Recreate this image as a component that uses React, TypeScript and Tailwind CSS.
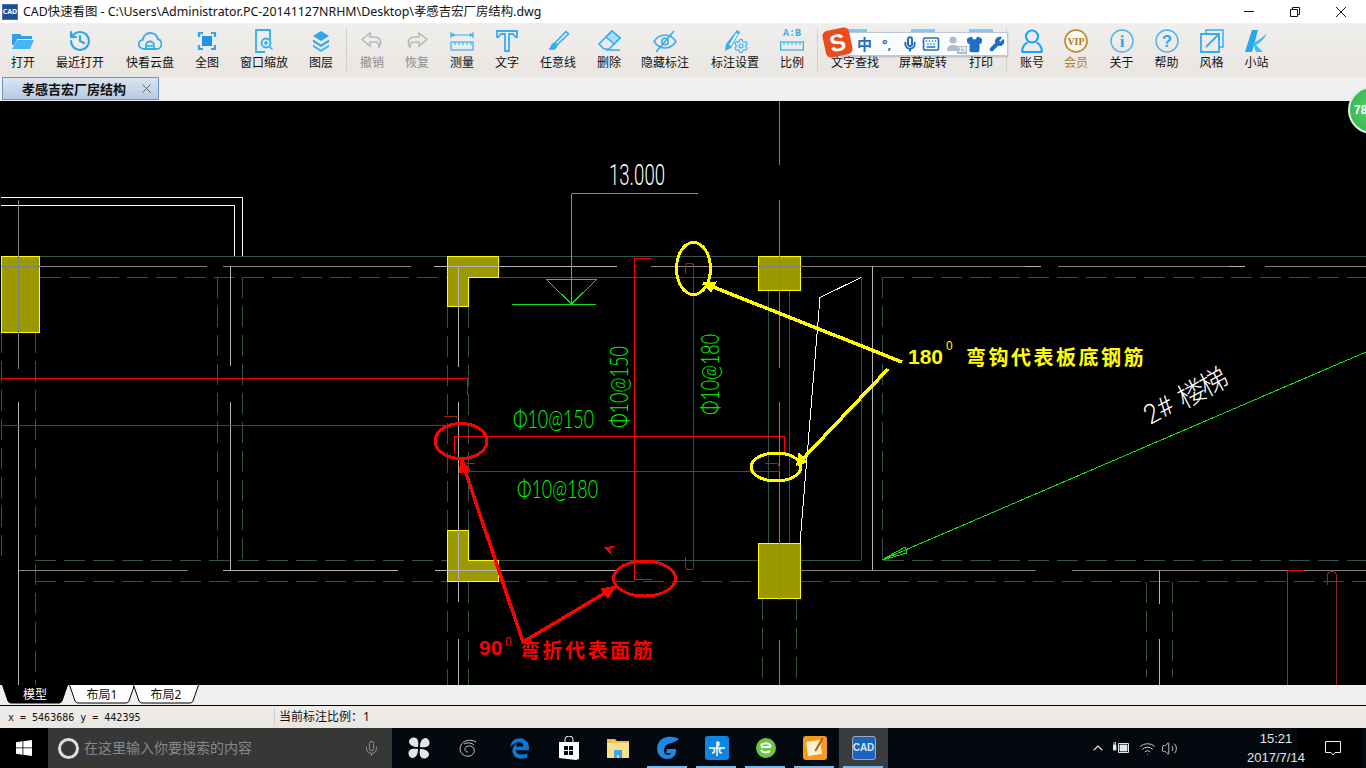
import React from 'react'
import { History, Settings, Mic, Wrench, Shirt, Keyboard, Wifi, Volume2, ChevronUp } from 'lucide-react'
import { FaEdgeLegacy } from 'react-icons/fa6'

const blue = '#35aef0'

function Box({ children }: { children: React.ReactNode }) {
    return (
        <svg width="24" height="24" viewBox="0 0 24 24" fill="none" stroke={blue} strokeWidth="1.6">
            {children}
        </svg>
    )
}

const icons: Record<string, React.ReactNode> = {
    open: (
        <Box>
            <path d="M1 5h8l2 2h10v3H6l-3 6H1z" fill="#2f9fe8" stroke="none" />
            <path d="M6 11h17l-4 9H1z" fill="#45b6f5" stroke="none" />
        </Box>
    ),
    recent: <History size={24} color="#2fa5ea" strokeWidth={2.2} />,
    cloud: (
        <Box>
            <path d="M6 20C2.500 20 0.800 17.500 0.800 15.200 0.800 12.800 2.500 11 4.800 10.800 5.400 6.800 8.500 4 12.300 4 16 4 19 6.500 19.800 10 22 10.500 23.400 12.800 23.400 15.200 23.400 17.800 21.500 20 18.500 20z" strokeWidth="1.8" />
            <path d="M8 20v-3.500a4 4 0 0 1 8 0V20" strokeWidth="1.8" />
            <path d="M8 17h8" />
        </Box>
    ),
    full: (
        <Box>
            <path d="M4 8V4h4M16 4h4v4M20 16v4h-4M8 20H4v-4" strokeWidth="2.2" stroke="#2fa5ea" />
            <rect x="7" y="7" width="10" height="10" fill="#1f93e6" stroke="none" />
        </Box>
    ),
    zoom: (
        <Box>
            <path d="M18 11V1H4v22h9" strokeWidth="1.8" />
            <circle cx="14" cy="14" r="4.500" strokeWidth="1.8" />
            <path d="M17.500 17.500l3 3M12 14h4M14 12v4" strokeWidth="1.600" />
        </Box>
    ),
    layers: (
        <Box>
            <path d="M12 2l8 5-8 5-8-5z" fill="#2fa5ea" stroke="none" />
            <path d="M4 10.500l8 5 8-5v2.500l-8 5-8-5z" fill="#2fa5ea" stroke="none" />
            <path d="M4 15.500l8 5 8-5V18l-8 5-8-5z" fill="#47b9f3" stroke="none" />
        </Box>
    ),
    undo: (
        <Box>
            <path d="M10 4L2 10.500 10 17v-4h5c2.500 0 4 1.500 4 5 3-4 2-10-5-10h-4z" stroke="#b8b8b8" />
        </Box>
    ),
    redo: (
        <Box>
            <path d="M14 4l8 6.500L14 17v-4H9c-2.500 0-4 1.500-4 5-3-4-2-10 5-10h4z" stroke="#b8b8b8" />
        </Box>
    ),
    measure: (
        <Box>
            <path d="M1 3v6M23 3v6M1 6h22" strokeWidth="1.200" />
            <path d="M1 6l3-1.500v3zM23 6l-3-1.500v3z" fill={blue} strokeWidth="0.600" />
            <rect x="1" y="13" width="22" height="8" strokeWidth="1.200" />
            <path d="M5 13v3M9 13v3M13 13v3M17 13v3M21 13v3" strokeWidth="1" />
        </Box>
    ),
    text: (
        <Box>
            <path d="M2 2h20v6h-1.500L18 5h-4v17h-4V5H6L3.500 8H2z" strokeWidth="1.800" />
        </Box>
    ),
    pen: (
        <Box>
            <path d="M9 14L20 2.500l2.500 2.500L11 16z" strokeWidth="1.600" />
            <path d="M9 14c-3 0-3.500 2-4 4l-2 2c3 1 8 1 8-4z" fill={blue} stroke={blue} strokeWidth="1" />
        </Box>
    ),
    eraser: (
        <Box>
            <path d="M15 2l8 7-11 11H7l-5-5z" strokeWidth="1.600" />
            <path d="M15 2l8 7-6 6-8-7z" fill="#a9dcf8" />
            <path d="M9 21h14" strokeWidth="1.600" />
        </Box>
    ),
    eye: (
        <Box>
            <path d="M1 12.500C4 8 8 6 12 6s8 2 11 6.500C20 17 16 19 12 19s-8-2-11-6.500z" strokeWidth="1.600" />
            <circle cx="12" cy="12.500" r="3.200" strokeWidth="1.600" />
            <path d="M21 2L3 23" strokeWidth="1.600" />
        </Box>
    ),
    mark: (
        <div className="relative h-6 w-6">
            <svg width="24" height="24" viewBox="0 0 24 24" fill="none">
                <path d="M14 1l3 2-9 16-6 3 1-7z" fill="#3aaeee" />
                <path d="M13 4l2 1-7 12-2-1z" fill="#eef6fb" />
            </svg>
            <Settings size={16} color={blue} strokeWidth={1.6} className="absolute top-[9px] left-[10px]" />
        </div>
    ),
    ratio: (
        <div className="flex h-6 w-6 flex-col items-center">
            <span className="h-[10px] font-['Liberation_Mono',monospace] text-[10px] leading-[10px] font-bold whitespace-nowrap text-[#35aef0]">A:B</span>
            <svg width="24" height="12" viewBox="0 0 24 12" fill="none" stroke={blue} strokeWidth="1.200" className="mt-[2px]">
                <rect x="0.600" y="1" width="22.800" height="8" />
                <path d="M4 1v3M8 1v3M12 1v3M16 1v3M20 1v3" strokeWidth="1" />
            </svg>
        </div>
    ),
    hidden: <div className="h-6 w-6 bg-[#7fcaf2]" />,
    user: (
        <svg width="24" height="24" viewBox="0 0 24 24" fill="none" stroke="#18a5f7" strokeWidth="2.200">
            <circle cx="12" cy="7.500" r="6" />
            <path d="M2 23c0-5 3-8.500 5.500-9.500M22 23c0-5-3-8.500-5.500-9.500M2 23h20" />
        </svg>
    ),
    vip: (
        <svg width="24" height="24" viewBox="0 0 24 24">
            <circle cx="12" cy="12" r="11" fill="#fdf8ee" stroke="#b8862c" strokeWidth="1.600" />
            <text x="12" y="15.500" textAnchor="middle" fontFamily="Liberation Serif, serif" fontWeight="700" fontSize="10" fill="#b07c1c">VIP</text>
        </svg>
    ),
    info: (
        <svg width="24" height="24" viewBox="0 0 24 24">
            <circle cx="12" cy="12" r="11" fill="none" stroke="#4db4ea" strokeWidth="1.400" />
            <text x="12" y="18" textAnchor="middle" fontFamily="Liberation Serif, serif" fontWeight="700" fontSize="17" fill="#36a7e6">i</text>
        </svg>
    ),
    help: (
        <svg width="24" height="24" viewBox="0 0 24 24">
            <circle cx="12" cy="12" r="11" fill="none" stroke="#4db4ea" strokeWidth="1.400" />
            <text x="12" y="18" textAnchor="middle" fontFamily="Liberation Sans, sans-serif" fontWeight="700" fontSize="17" fill="#36a7e6">?</text>
        </svg>
    ),
    style: (
        <Box>
            <path d="M6 5V1h17v17h-4" strokeWidth="1.500" />
            <path d="M1 5h18v18H1z" strokeWidth="1.800" />
            <path d="M6 18L19 5M12 5h7v7" strokeWidth="1.800" />
        </Box>
    ),
    site: (
        <svg width="24" height="24" viewBox="0 0 24 24">
            <path d="M7 1h6L7 23H0z" fill="#24a8ee" />
            <path d="M8 14C13 12 18 8 22 4 20 9 15 14 11 16l7 7h-7z" fill="#3fc0f5" />
        </svg>
    ),
}

type Tool = { label: string; width: string; icon: string; muted?: boolean; gold?: boolean }

const tools: (Tool | 'sep')[] = [
    { label: '打开', width: 'w-[46px]', icon: 'open' },
    { label: '最近打开', width: 'w-[68px]', icon: 'recent' },
    { label: '快看云盘', width: 'w-[72px]', icon: 'cloud' },
    { label: '全图', width: 'w-[42px]', icon: 'full' },
    { label: '窗口缩放', width: 'w-[72px]', icon: 'zoom' },
    { label: '图层', width: 'w-[42px]', icon: 'layers' },
    { label: '', width: 'w-[4px]', icon: '' },
    'sep',
    { label: '撤销', width: 'w-[50px]', icon: 'undo', muted: true },
    { label: '恢复', width: 'w-[40px]', icon: 'redo', muted: true },
    { label: '测量', width: 'w-[50px]', icon: 'measure' },
    { label: '文字', width: 'w-[40px]', icon: 'text' },
    { label: '任意线', width: 'w-[62px]', icon: 'pen' },
    { label: '删除', width: 'w-[40px]', icon: 'eraser' },
    { label: '隐藏标注', width: 'w-[72px]', icon: 'eye' },
    { label: '标注设置', width: 'w-[68px]', icon: 'mark' },
    { label: '比例', width: 'w-[46px]', icon: 'ratio' },
    { label: '', width: 'w-[2px]', icon: '' },
    'sep',
    { label: '文字查找', width: 'w-[74px]', icon: 'hidden' },
    { label: '屏幕旋转', width: 'w-[62px]', icon: 'hidden' },
    { label: '', width: 'w-[2px]', icon: '' },
    { label: '打印', width: 'w-[50px]', icon: 'hidden' },
    'sep',
    { label: '账号', width: 'w-[50px]', icon: 'user' },
    { label: '会员', width: 'w-[38px]', icon: 'vip', gold: true },
    { label: '关于', width: 'w-[53px]', icon: 'info' },
    { label: '帮助', width: 'w-[37px]', icon: 'help' },
    { label: '风格', width: 'w-[53px]', icon: 'style' },
    { label: '小站', width: 'w-[37px]', icon: 'site' },
]

function Toolbar() {
    return (
        <div className="relative flex h-[54px] items-start bg-linear-to-b from-[#f0efed] to-[#e9e5e1]">
            {tools.map((tool, i) =>
                tool === 'sep' ? (
                    <div key={i} className="mt-[5px] h-[44px] w-px shrink-0 bg-[#d2d0ce]" />
                ) : (
                    <div key={i} className={`${tool.width} flex shrink-0 flex-col items-center pt-[6px]`}>
                        {tool.icon && <div className="h-6 w-6">{icons[tool.icon]}</div>}
                        {tool.label && (
                            <span className={`mt-[2px] text-[12px] leading-[16px] whitespace-nowrap ${tool.muted ? 'text-[#8c8c8c]' : tool.gold ? 'text-[#b8801e]' : 'text-[#111]'}`}>
                                {tool.label}
                            </span>
                        )}
                    </div>
                ),
            )}
            <ImeBar />
        </div>
    )
}

// floating sogou input bar sitting on top of the toolbar
function ImeBar() {
    return (
        <div className="absolute top-[9px] left-[840px] flex h-[24px] w-[168px] items-center border border-[#b9c7d9] bg-[#fbfcfe] shadow-[0_1px_2px_rgba(90,110,140,0.4)]">
            <span className="ml-[16px] w-[16px] text-[15px] leading-[16px] font-bold text-[#1f6fc4]">中</span>
            <span className="ml-[9px] w-[14px] text-[13px] leading-[16px] font-bold text-[#1f6fc4]">°,</span>
            <Mic size={16} color="#1f6fc4" strokeWidth={3} className="ml-[6px]" />
            <Keyboard size={18} color="#1f6fc4" strokeWidth={2.2} className="ml-[4px]" />
            <div className="relative ml-[5px] h-[18px] w-[18px]">
                <svg width="18" height="18" viewBox="0 0 18 18" fill="#aebccb">
                    <circle cx="8" cy="5" r="3.500" />
                    <path d="M2 16c0-5 3-6 6-6s6 1 6 6z" />
                </svg>
                <span className="absolute right-[-4px] bottom-[-1px] bg-[#aebccb] px-px font-['Liberation_Sans',sans-serif] text-[7px] leading-[8px] font-bold text-white">15</span>
            </div>
            <Shirt size={17} color="#1f6fc4" fill="#1f6fc4" className="ml-[3px]" />
            <Wrench size={16} color="#1f6fc4" fill="#1f6fc4" className="ml-[6px]" />
            <div className="absolute top-[-4px] left-[-17px] flex h-[27px] w-[27px] rotate-[-12deg] items-center justify-center rounded-[5px] bg-[#ea4c1c] font-['Liberation_Sans',sans-serif] text-[24px] leading-none font-bold text-white">
                S
            </div>
        </div>
    )
}

const tealSolid = 'M40 256.500H1366M498 277.500H758M801 277.500H861M498 560.500H861M768.500 291V543M789.500 291V543M861.500 277V560'
const tealDash =
    'M40 277.500H447M883 277.500H1366M35 560.500H447M883 560.500H1366M35 581.500H447M498 581.500H758M801 581.500H1366M1.500 332V560M35.500 332V685M217.500 277V560M242.500 277V560M447.500 307V530M447.500 582V685M468.500 307V530M468.500 582V685M882.500 277V560M762.500 599V685M796.500 599V685M1146.500 582V677M1172.500 582V677'
const grayDark =
    'M1 266.500H207M223 266.500H411M651 266.500H1025M1058 266.500H1229M1265 266.500H1366M18.500 200V369M779.500 101V165M779.500 200V368M779.500 402V600M779.500 640V685M18 570.500H188M801 570.500H1036M1072 570.500H1366'
const grayLight =
    'M18.500 402V685M230.500 266V366M230.500 402V570M458.500 266V367M458.500 402V602M458.500 639V685M223 570.500H398M435 570.500H617M872.500 266V570M1159.500 570V604M1159.500 639V685M434 266.500H617M1025 266.500H1041M1229 266.500H1245'
const darkRed =
    'M1 425.500H450M444 416.500H456L458 419M463 471.500H779V466Q779 463.500 775 463.500H765M466 463.500H475M693.500 266V568Q693.500 570 689 570 685.500 570 685.500 566V557M693.500 266Q693.500 263 689 263 685.500 263 685.500 267V274M1336.500 576V685M1336.500 576Q1336.500 571.500 1332 571.500 1327.500 571.500 1327.500 576V585'

function Drawing() {
    return (
        <svg width="1366" height="584" viewBox="0 101 1366 584" fill="none" shapeRendering="crispEdges" className="block">
            <path d="M1 197.500H242.500V256M1 205.500H234.500V256" stroke="#fff" />
            <path d={tealSolid} stroke="#34504f" />
            <path d={tealDash} stroke="#34504f" strokeDasharray="21 8" />

            <g fill="#9c9800" stroke="#ffff00">
                <rect x="1.500" y="256.500" width="38" height="76" />
                <path d="M447.500 256.500H498.500V277.500H468.500V306.500H447.500Z" />
                <path d="M447.500 530.500H468.500V560.500H498.500V581.500H447.500Z" />
                <rect x="758.500" y="256.500" width="42" height="34" />
                <rect x="758.500" y="543.500" width="42" height="55" />
            </g>

            <path d={grayDark} stroke="#808080" />
            <path d={grayLight} stroke="#b4b4b4" />
            <path d="M861 277.500L820 297.500 800 543" stroke="#fff" />

            <path d={darkRed} stroke="#8e2c12" />
            <path
                d="M1 378.500H467V395M634.500 579.500V258.500H652M634.500 579.500H652M454.500 453V436.500H784.500V452M1287.500 685V570.500H1304"
                stroke="#ff0000"
            />

            <path d="M571.500 193.500H698M571.500 193.500V304M512 304.500H596M546 279H597L571.500 304Z" stroke="#16e016" />
            <path d="M882 560L1366 352M882 560L905 547 907 553Z" stroke="#16e016" />

            <text x="609" y="185" fill="#fff" fontFamily="Roboto, sans-serif" fontWeight="300" fontSize="29" textLength="56" lengthAdjust="spacingAndGlyphs">13.000</text>
            <g fill="#00ff00" fontFamily="Lato, sans-serif" fontWeight="300" fontSize="25">
                <text x="513" y="428" textLength="81" lengthAdjust="spacingAndGlyphs">Φ10@150</text>
                <text x="517" y="498" textLength="81" lengthAdjust="spacingAndGlyphs">Φ10@180</text>
                <text transform="translate(628 428) rotate(-90)" textLength="82" lengthAdjust="spacingAndGlyphs">Φ10@150</text>
                <text transform="translate(719 415) rotate(-90)" textLength="81" lengthAdjust="spacingAndGlyphs">Φ10@180</text>
            </g>
            <g fill="#fff" fontWeight="300">
                <text transform="translate(1150 425) rotate(-28)" fontFamily="Roboto, sans-serif" fontSize="27" textLength="29" lengthAdjust="spacingAndGlyphs">2#</text>
                <text transform="translate(1184 409) rotate(-28)" fontFamily="'Noto Sans CJK SC', sans-serif" fontSize="28" letterSpacing="-3">楼梯</text>
            </g>

            <ellipse cx="693.500" cy="268.500" rx="17" ry="26" stroke="#ffff00" strokeWidth="3" />
            <ellipse cx="776" cy="467" rx="25" ry="14" stroke="#ffff00" strokeWidth="3" />
            <ellipse cx="461" cy="441" rx="26" ry="17.500" stroke="#ff0000" strokeWidth="3" />
            <ellipse cx="644.500" cy="578.500" rx="31" ry="17.500" stroke="#ff0000" strokeWidth="3" />

            <path d="M902 362L703 283M888 369L797 465" stroke="#ffff00" strokeWidth="3.500" />
            <path d="M703 283L716 282 711 292ZM797 465L799 453 807 462Z" fill="#ffff00" stroke="#ffff00" />
            <path d="M523 642L461.500 460M523 642L615 587" stroke="#ff0000" strokeWidth="3.500" />
            <path d="M461 459L470 470 459 473ZM616 586L608 598 601 589Z" fill="#ff0000" stroke="#ff0000" />
            <path d="M603 547L616 546 610 549 612 555Z" fill="#ff0000" />

            <g fontFamily="'Liberation Sans', 'Noto Sans CJK SC', sans-serif" fontWeight="700" fill="#ffff00">
                <text x="908" y="364" fontSize="21">180</text>
                <text x="946" y="350" fontSize="12" fontWeight="400">0</text>
                <text x="966" y="365" fontSize="20" letterSpacing="2.500">弯钩代表板底钢筋</text>
            </g>
            <g fontFamily="'Liberation Sans', 'Noto Sans CJK SC', sans-serif" fontWeight="700" fill="#ff0000">
                <text x="479" y="655" fontSize="21">90</text>
                <text x="505" y="646" fontSize="12" fontWeight="400">0</text>
                <text x="520" y="658" fontSize="20" letterSpacing="2.500">弯折代表面筋</text>
            </g>
        </svg>
    )
}

function SheetTab({ label, active, gap }: { label: string; active?: boolean; gap: string }) {
    return (
        <div className={`relative ${gap} flex h-[19px] w-[66px] items-center justify-center`}>
            <svg width="66" height="19" viewBox="0 0 66 19" className="absolute inset-0">
                <path d="M0.500 0L6 16Q7 18 9 18H57Q59 18 60 16L65.500 0" fill={active ? '#000' : '#fff'} stroke="#000" />
            </svg>
            <span className={`relative text-[12px] leading-[16px] ${active ? 'text-white' : 'text-[#111]'}`}>{label}</span>
        </div>
    )
}

function TaskIcon({ children, open, active }: { children: React.ReactNode; open?: boolean; active?: boolean }) {
    return (
        <div className={`relative flex h-10 w-[49px] shrink-0 items-center justify-center ${active ? 'bg-[#3a3d40]' : ''}`}>
            {children}
            {open && <div className="absolute bottom-0 left-[4px] h-[2px] w-[40px] bg-[#76b9ed]" />}
        </div>
    )
}

function Taskbar() {
    return (
        <div className="flex h-10 items-center bg-[#03090f] font-['Liberation_Sans','Noto_Sans_CJK_SC',sans-serif] text-[#e6e6e6]">
            <div className="flex h-10 w-12 shrink-0 items-center justify-center bg-black">
                <svg width="16" height="16" viewBox="0 0 16 16" fill="#fff">
                    <path d="M0 2.200L6.500 1.300V7.500H0zM7.300 1.200L16 0V7.500H7.300zM0 8.300H6.500V14.700L0 13.800zM7.300 8.300H16V16L7.300 14.800z" />
                </svg>
            </div>
            <div className="flex h-10 w-[344px] shrink-0 items-center bg-[#373737] pl-[10px]">
                <div className="h-[21px] w-[21px] rounded-full border-[3px] border-[#dcdcdc]" />
                <span className="ml-[5px] text-[14px] text-[#85898e]">在这里输入你要搜索的内容</span>
                <Mic size={17} color="#8f8f8f" strokeWidth={1.4} className="ml-[111px]" />
            </div>
            <div className="w-[2px] shrink-0" />
            <TaskIcon>
                <svg width="22" height="22" viewBox="0 0 22 22" fill="#e2e6e8">
                    <path d="M10 10C5 10 2 8.500 1 5 1 2 3.500 0.500 6 0.500c4 0 5 4.500 4 9.500zM12 10c0-5 1.500-8 5-9 3 0 4.500 2.500 4.500 5 0 4-4.500 5-9.500 4zM12 12c5 0 8 1.500 9 5 0 3-2.500 4.500-5 4.500-4 0-5-4.500-4-9.500zM10 12c0 5-1.500 8-5 9-3 0-4.500-2.500-4.500-5 0-4 4.500-5 9.500-4z" />
                </svg>
            </TaskIcon>
            <TaskIcon>
                <svg width="20" height="20" viewBox="0 0 20 20" fill="none" stroke="#c8c8c8" strokeWidth="1">
                    <path d="M18 4C12 0 2 3 2 11c0 5 5 8 10 7 3-1 5-4 4-7-1-3-5-4-8-2-2 2-1 5 2 5M6 6c4-2 8-1 10 1" />
                </svg>
            </TaskIcon>
            <div className="w-[3px] shrink-0" />
            <TaskIcon>
                <FaEdgeLegacy size={21} color="#0a78d6" />
            </TaskIcon>
            <TaskIcon>
                <svg width="22" height="24" viewBox="0 0 22 24">
                    <path d="M1 6h20v17l-3 1L1 22z" fill="#fff" />
                    <path d="M7 6V3a4 3 0 0 1 8 0v3" fill="none" stroke="#fff" strokeWidth="1" />
                    <path d="M6 10h4v4H6zM11 10h4v4h-4zM6 15h4v4H6zM11 15h4v4h-4z" fill="#03090f" />
                </svg>
            </TaskIcon>
            <TaskIcon>
                <svg width="22" height="20" viewBox="0 0 22 20">
                    <path d="M0 1h8l2 2h12v3H0z" fill="#e8c05a" />
                    <path d="M0 5h22v15H0z" fill="#fbdf8c" />
                    <path d="M7 12h8v8h-3v-3h-2v3H7z" fill="#3fa7e8" />
                </svg>
            </TaskIcon>
            <div className="w-[1px] shrink-0" />
            <TaskIcon open>
                <svg width="24" height="24" viewBox="0 0 24 24">
                    <path d="M23 3C16 -1 5 0 2 8c-3 8 2 15 9 15 6 0 10-4 9-10h-9l-1 4h5c-1 2-4 3-6 1-2-3-1-8 3-10 3-1 6-1 11-5z" fill="#1e88e5" />
                </svg>
            </TaskIcon>
            <TaskIcon open>
                <div className="flex h-6 w-6 items-center justify-center rounded-[3px] bg-[#0e86e0]">
                    <svg width="18" height="18" viewBox="0 0 18 18" fill="none" stroke="#fff" strokeWidth="1.500">
                        <path d="M9 17V3M9 3a2 2 0 0 1 0 4M1 9h16M4 9a2.500 2.500 0 0 1 0 5M14 9a2.500 2.500 0 0 0 0 5" />
                    </svg>
                </div>
            </TaskIcon>
            <TaskIcon open>
                <svg width="24" height="24" viewBox="0 0 24 24">
                    <circle cx="12" cy="12" r="10" fill="#6cc644" />
                    <path d="M7 11h10M7 14c2 3 7 3 9 1M7 10c1-3 7-4 10 0" fill="none" stroke="#fff" strokeWidth="2" />
                </svg>
            </TaskIcon>
            <TaskIcon open>
                <div className="relative h-6 w-6 rounded-[3px] bg-[#f59a1f]">
                    <div className="absolute top-[5px] left-[4px] h-[14px] w-[14px] rotate-[-8deg] bg-[#fbf0d0]" />
                    <div className="absolute top-[1px] left-[15px] h-[15px] w-[2px] rotate-[30deg] bg-[#b5591a]" />
                </div>
            </TaskIcon>
            <TaskIcon open active>
                <div className="flex h-6 w-6 items-center justify-center rounded-[3px] border border-[#9fa9b5] bg-[#1c63c0] text-[10px] leading-none font-bold text-[#d6e6f8]">
                    CAD
                </div>
            </TaskIcon>
            <div className="flex-1" />
            <ChevronUp size={16} strokeWidth={1.600} color="#e6e6e6" />
            <svg width="18" height="14" viewBox="0 0 18 14" fill="none" stroke="#e6e6e6" className="ml-[7px]">
                <path d="M5.500 2.500H15.500V11.500H5.500z" />
                <path d="M7 4h7v6H7zM0 4h3v5H0zM1 1v3M2.500 1v3" fill="#e6e6e6" strokeWidth="0.800" />
            </svg>
            <Wifi size={17} strokeWidth={1.300} color="#d0d0d0" className="ml-[8px]" />
            <Volume2 size={17} strokeWidth={1.200} color="#e0e0e0" className="ml-[5px]" />
            <div className="relative z-10 -mr-[12px] ml-[65px] flex w-[66px] flex-col items-center text-[13px] leading-[19px]">
                <span>15:21</span>
                <span>2017/7/14</span>
            </div>
            <div className="flex h-10 w-[65px] items-center justify-center bg-black pl-[6px]">
                <svg width="18" height="16" viewBox="0 0 18 16" fill="none" stroke="#f0f0f0">
                    <path d="M1.500 1.500H16.500V12.500H11L9 15 7 12.500H1.500z" />
                </svg>
            </div>
            <div className="h-10 w-[4px] bg-[#03090f]" />
        </div>
    )
}

export default function App() {
    return (
        <div className="relative flex h-[768px] w-[1366px] flex-col overflow-hidden bg-white font-['Noto_Sans','Noto_Sans_CJK_SC',sans-serif]">
            <div className="flex h-[23px] items-center">
                <div className="ml-[2px] flex h-4 w-4 items-center justify-center border border-[#4c78b0] bg-[#1d4f90] text-[7px] leading-none font-bold text-white">
                    CAD
                </div>
                <span className="ml-[5px] text-[12.400px] leading-[16px] whitespace-nowrap text-[#111]">
                    CAD快速看图 - C:\Users\Administrator.PC-20141127NRHM\Desktop\孝感吉宏厂房结构.dwg
                </span>
                <div className="flex-1" />
                <svg width="10" height="1" className="mr-[36px]">
                    <rect width="10" height="1" fill="#111" />
                </svg>
                <svg width="10" height="10" viewBox="0 0 10 10" fill="none" stroke="#111" className="mr-[36px]">
                    <path d="M0.500 2.500H7.500V9.500H0.500zM2.500 2.500V0.500H9.500V7.500H7.500" />
                </svg>
                <svg width="10" height="10" viewBox="0 0 10 10" stroke="#111" className="mr-5">
                    <path d="M0 0L10 10M10 0L0 10" />
                </svg>
            </div>

            <Toolbar />

            <div className="flex h-[24px] items-end bg-[#efefef] pb-px pl-[2px]">
                <div className="flex h-[23px] w-[157px] items-center border border-[#6f94c6] bg-linear-to-b from-[#dbe5f1] to-[#b6cae2] pl-[19px]">
                    <span className="text-[13px] leading-[16px] font-bold whitespace-nowrap text-[#111]">孝感吉宏厂房结构</span>
                    <svg width="9" height="9" viewBox="0 0 9 9" stroke="#666" className="ml-[16px]">
                        <path d="M0.500 0.500L8.500 8.500M8.500 0.500L0.500 8.500" />
                    </svg>
                </div>
            </div>

            <div className="relative h-[584px] bg-black">
                <Drawing />
                {/* float ball, cut off by the screen edge */}
                <div className="absolute top-[-15px] left-[1348px] flex h-12 w-12 items-center rounded-full border-2 border-[#e4efe4] bg-radial from-[#55d56a] to-[#2fae4c] pl-[4px] font-['Liberation_Sans',sans-serif] text-[12px] font-bold text-white">
                    78
                </div>
            </div>

            <div className="flex h-[21px] items-start border-b border-black bg-[#f0f0f0] pl-[2px]">
                <SheetTab label="模型" active gap="mr-[1px]" />
                <SheetTab label="布局1" gap="-mr-[2px]" />
                <SheetTab label="布局2" gap="" />
            </div>

            <div className="flex h-[22px] items-center bg-linear-to-b from-[#efedeb] to-[#e9e5e1] text-[#111]">
                <span className="ml-[8px] w-[266px] font-['DejaVu_Sans_Mono',monospace] text-[10px]">x = 5463686 y = 442395</span>
                <div className="h-[18px] w-px bg-[#cfcdcb]" />
                <span className="ml-[4px] text-[12px]">当前标注比例：1</span>
            </div>

            <Taskbar />
        </div>
    )
}
